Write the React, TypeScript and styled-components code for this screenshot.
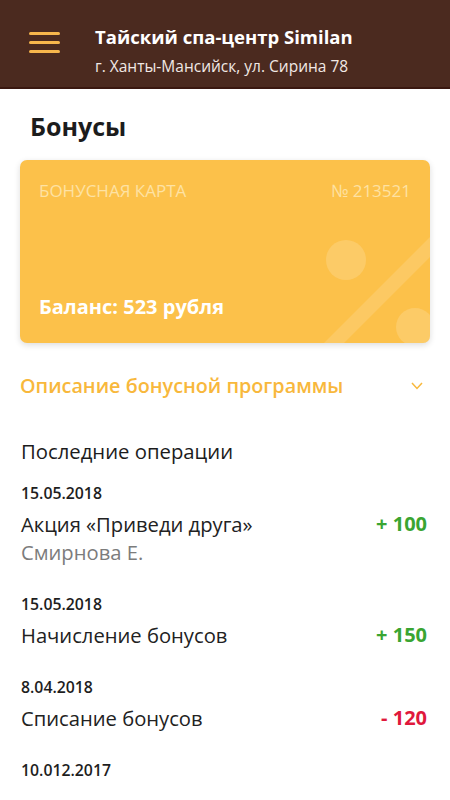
import React from "react";
import styled, { createGlobalStyle } from "styled-components";

const Global = createGlobalStyle`
  html, body { margin: 0; padding: 0; background: #ffffff; }
  body { font-family: "Open Sans", "Noto Sans", sans-serif; -webkit-font-smoothing: antialiased; }
  * { box-sizing: border-box; }
`;

const Page = styled.div`
  width: 450px;
  height: 800px;
  background: #fff;
  overflow: hidden;
`;

const Header = styled.header`
  height: 89px;
  background: #4b2a1f;
  border-bottom: 2px solid #3a1810;
  display: flex;
  align-items: flex-start;
  padding-left: 29px;
  gap: 35px;
`;

const Burger = styled.div`
  width: 31px;
  margin-top: 32px;
  display: flex;
  flex-direction: column;
  gap: 6px;
`;

const BurgerLine = styled.span`
  display: block;
  height: 3px;
  border-radius: 2px;
  background: #f7b64c;
`;

const HeaderText = styled.div`
  margin-top: 25px;
  display: flex;
  flex-direction: column;
  gap: 6px;
`;

const Title = styled.div`
  color: #fff;
  font-size: 18.5px;
  font-weight: 700;
  line-height: 24px;
  white-space: nowrap;
`;

const Subtitle = styled.div`
  color: #f1e8e4;
  font-size: 15.5px;
  line-height: 22px;
  white-space: nowrap;
`;

const Content = styled.main`
  padding: 0 20px;
`;

const PageTitle = styled.h1`
  margin: 22px 0 0 10px;
  font-size: 25px;
  font-weight: 700;
  color: #1c1c1c;
  line-height: 30px;
`;

const Card = styled.div`
  position: relative;
  margin-top: 19px;
  height: 183px;
  border-radius: 7px;
  background: #fcc14a;
  box-shadow: 0 2px 6px rgba(0, 0, 0, 0.14);
  overflow: hidden;
  padding: 20px 19px 24px 19px;
  display: flex;
  flex-direction: column;
  justify-content: space-between;
`;

const CardTop = styled.div`
  display: flex;
  justify-content: space-between;
  color: #fee2a3;
  font-size: 17px;
  line-height: 22px;
  position: relative;
`;

const Balance = styled.div`
  color: #fff;
  font-size: 20px;
  font-weight: 700;
  line-height: 24px;
  position: relative;
`;

const Deco = styled.svg`
  position: absolute;
  right: 0;
  bottom: 0;
`;

const Accordion = styled.div`
  margin-top: 30px;
  display: flex;
  align-items: center;
  justify-content: space-between;
  padding-right: 7px;
`;

const AccordionLabel = styled.div`
  color: #f8b83c;
  font-size: 19.8px;
  font-weight: 600;
  line-height: 26px;
`;

const SectionTitle = styled.h2`
  margin: 39px 0 0 1px;
  font-size: 20.3px;
  font-weight: 500;
  color: #1c1c1c;
  line-height: 26px;
`;

const Ops = styled.div`
  margin-top: 19px;
  display: flex;
  flex-direction: column;
  gap: 28px;
`;

const Op = styled.div`
  display: flex;
  flex-direction: column;
`;

const DateText = styled.div`
  margin-left: 1px;
  font-size: 15.8px;
  font-weight: 600;
  color: #1e1e1e;
  line-height: 20px;
`;

const OpRow = styled.div`
  margin-top: 7px;
  display: flex;
  justify-content: space-between;
  align-items: flex-start;
`;

const OpInfo = styled.div`
  margin-left: 1px;
  display: flex;
  flex-direction: column;
`;

const OpTitle = styled.div`
  font-size: 20.2px;
  color: #222;
  line-height: 28px;
`;

const OpSub = styled.div`
  font-size: 20.2px;
  color: #7c7c7c;
  line-height: 28px;
`;

const Amount = styled.div<{ $neg?: boolean }>`
  font-size: 20px;
  font-weight: 700;
  line-height: 28px;
  color: ${(p) => (p.$neg ? "#e0183c" : "#3aa532")};
  padding-right: 3px;
`;

type Operation = { date: string; title?: string; sub?: string; amount?: string; neg?: boolean };

const ops: Operation[] = [
  { date: "15.05.2018", title: "Акция «Приведи друга»", sub: "Смирнова Е.", amount: "+ 100" },
  { date: "15.05.2018", title: "Начисление бонусов", amount: "+ 150" },
  { date: "8.04.2018", title: "Списание бонусов", amount: "- 120", neg: true },
  { date: "10.012.2017" },
];

export default function App() {
  return (
    <Page>
      <Global />
      <Header>
        <Burger>
          <BurgerLine />
          <BurgerLine />
          <BurgerLine />
        </Burger>
        <HeaderText>
          <Title>Тайский спа-центр Similan</Title>
          <Subtitle>г. Ханты-Мансийск, ул. Сирина 78</Subtitle>
        </HeaderText>
      </Header>
      <Content>
        <PageTitle>Бонусы</PageTitle>
        <Card>
          <Deco width="120" height="120" viewBox="0 0 120 120">
            <circle cx="36" cy="37" r="20" fill="#ffffff" opacity="0.16" />
            <polygon points="120,14 120,34 34,120 14,120" fill="#ffffff" opacity="0.14" />
            <circle cx="105" cy="104" r="19" fill="#ffffff" opacity="0.16" />
          </Deco>
          <CardTop>
            <span>БОНУСНАЯ КАРТА</span>
            <span>№ 213521</span>
          </CardTop>
          <Balance>Баланс: 523 рубля</Balance>
        </Card>
        <Accordion>
          <AccordionLabel>Описание бонусной программы</AccordionLabel>
          <svg width="12" height="8" viewBox="0 0 12 8">
            <polyline points="1,1 6,6.5 11,1" fill="none" stroke="#f8b83c" strokeWidth="1.5" />
          </svg>
        </Accordion>
        <SectionTitle>Последние операции</SectionTitle>
        <Ops>
          {ops.map((o, i) => (
            <Op key={i}>
              <DateText>{o.date}</DateText>
              {o.title && (
                <OpRow>
                  <OpInfo>
                    <OpTitle>{o.title}</OpTitle>
                    {o.sub && <OpSub>{o.sub}</OpSub>}
                  </OpInfo>
                  <Amount $neg={o.neg}>{o.amount}</Amount>
                </OpRow>
              )}
            </Op>
          ))}
        </Ops>
      </Content>
    </Page>
  );
}
